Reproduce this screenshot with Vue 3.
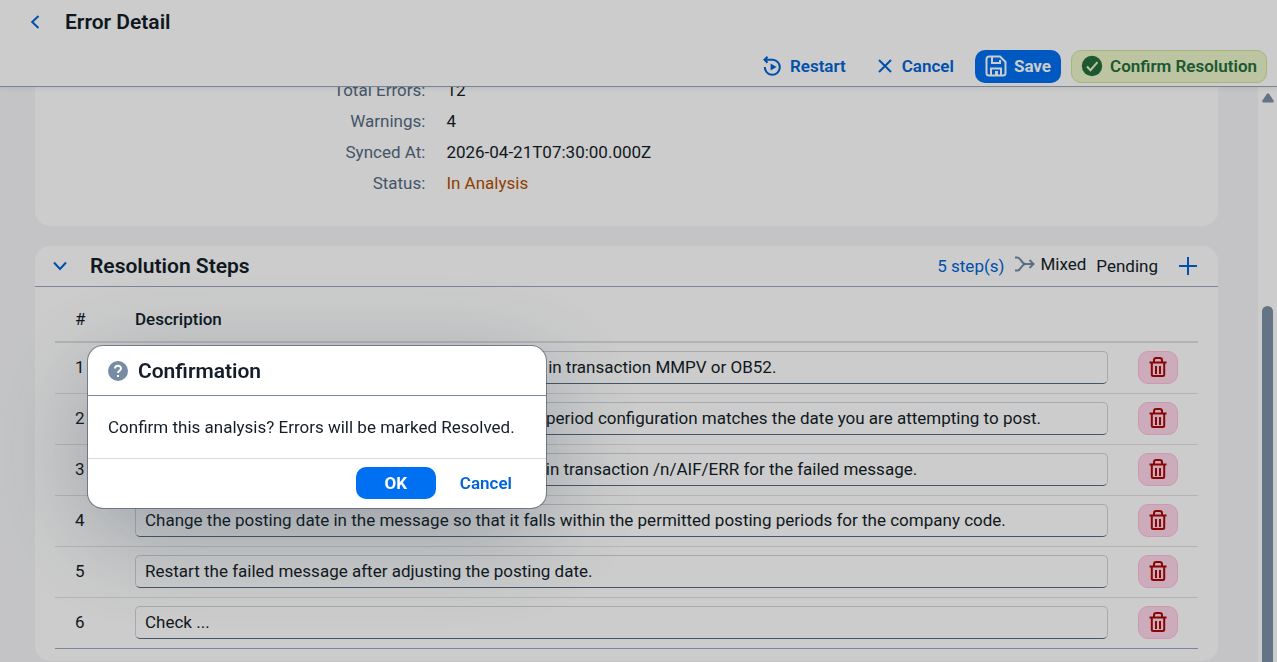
<script setup>
import { ref } from 'vue'

const facts = [
  { label: 'Total Errors:', value: '12' },
  { label: 'Warnings:', value: '4' },
  { label: 'Synced At:', value: '2026-04-21T07:30:00.000Z' },
  { label: 'Status:', value: 'In Analysis', critical: true },
]

const steps = ref([
  'Open the posting period for the whole company code in transaction MMPV or OB52.',
  'Check that the current fiscal year variant and posting period configuration matches the date you are attempting to post.',
  'Analyze the detailed application message log entries in transaction /n/AIF/ERR for the failed message.',
  'Change the posting date in the message so that it falls within the permitted posting periods for the company code.',
  'Restart the failed message after adjusting the posting date.',
  'Check ...',
])
</script>

<template>
  <div class="page">
    <header class="page-header">
      <div class="title-row">
        <button class="back" aria-label="Back">
          <svg width="10" height="14" viewBox="0 0 10 14"><path d="M8.500 1 2.200 7l6.300 6" /></svg>
        </button>
        <h1>Error Detail</h1>
      </div>
      <div class="toolbar">
        <button class="btn">
          <svg class="icon" width="20" height="20" viewBox="0 0 20 20">
            <path d="M4.500 0.800 1.500 3.800l3 3M1.800 3.800h8.200a7.500 7.500 0 1 1-8.200 7.200" />
            <path class="solid" d="M7.600 7.400v7.200l6-3.600z" />
          </svg>
          Restart
        </button>
        <button class="btn close">
          <svg class="icon" width="14" height="14" viewBox="0 0 14 14"><path d="m1 1 12 12M13 1 1 13" /></svg>
          Cancel
        </button>
        <button class="btn primary">
          <svg class="icon" width="22" height="22" viewBox="0 0 22 22">
            <path d="M4 1.500h11l5.500 5.500v11a2.500 2.500 0 0 1-2.500 2.500H4A2.500 2.500 0 0 1 1.500 18V4A2.500 2.500 0 0 1 4 1.500z" />
            <path d="M7 1.500V8h8V5M6 20.500V13.500h10v7" />
            <path class="solid" d="M10 16h3v4h-3z" />
          </svg>
          Save
        </button>
        <button class="btn accept">
          <svg class="icon" width="22" height="22" viewBox="0 0 22 22">
            <circle class="disc" cx="11" cy="11" r="10.200" />
            <path class="tick" d="m6 11.500 3.500 3.700 7-8" />
          </svg>
          Confirm Resolution
        </button>
      </div>
    </header>

    <div class="scroller">
      <main class="content">
        <section class="card facts">
          <dl>
            <template v-for="fact in facts" :key="fact.label">
              <dt>{{ fact.label }}</dt>
              <dd :class="{ critical: fact.critical }">{{ fact.value }}</dd>
            </template>
          </dl>
        </section>

        <section class="card steps">
          <div class="card-header">
            <button class="toggle" aria-label="Collapse section">
              <svg width="14" height="10" viewBox="0 0 14 10"><path d="M1 1.500 7 8l6-6.500" /></svg>
            </button>
            <h2>Resolution Steps</h2>
            <a class="count" href="#steps">5 step(s)</a>
            <span class="mixed">
              <svg width="21" height="16" viewBox="0 0 21 16">
                <path d="M1 1.500h2.500c3.500 0 4 6.500 8 6.500h8M1 14.500h2.500c3.500 0 4-6.500 8-6.500M15.500 4l4 4-4 4" />
              </svg>
              Mixed
            </span>
            <span class="pending">Pending</span>
            <button class="add" aria-label="Add step">
              <svg width="18" height="18" viewBox="0 0 18 18"><path d="M9 0v18M0 9h18" /></svg>
            </button>
          </div>
          <table id="steps">
            <thead>
              <tr>
                <th class="num" scope="col">#</th>
                <th scope="col">Description</th>
                <th class="action"></th>
              </tr>
            </thead>
            <tbody>
              <tr v-for="(step, i) in steps" :key="i">
                <td class="num">{{ i + 1 }}</td>
                <td><input v-model="steps[i]" type="text" :aria-label="`Description of step ${i + 1}`" /></td>
                <td class="action">
                  <button class="delete" :aria-label="`Delete step ${i + 1}`">
                    <svg width="18" height="20" viewBox="0 0 18 20">
                      <path d="M0.500 5.500h17M5 5V3.200Q5 1 7.200 1h3.600Q13 1 13 3.200V5M2.800 6v11.500q0 1.500 1.500 1.500h9.400q1.500 0 1.500-1.500V6" />
                      <path d="M7 9v8M11 9v8" />
                    </svg>
                  </button>
                </td>
              </tr>
            </tbody>
          </table>
        </section>
      </main>
      <div class="scrollbar" aria-hidden="true">
        <svg width="12" height="10" viewBox="0 0 12 10"><path d="M5 .8Q6-.4 7 .8l4.600 6.600Q12.400 9.500 10.500 9.500h-9Q-.4 9.500.4 7.400z" /></svg>
        <div class="thumb"></div>
      </div>
    </div>

    <div class="overlay">
      <div class="dialog" role="alertdialog" aria-labelledby="dialog-title" aria-describedby="dialog-text">
        <div class="dialog-header">
          <svg width="20" height="20" viewBox="0 0 20 20">
            <circle cx="10" cy="10" r="10" />
            <path d="M7 7.600C7 3.800 13 3.800 13 7.500c0 2.300-3 2-3 4.500" />
            <path d="M10 14v2" />
          </svg>
          <h2 id="dialog-title">Confirmation</h2>
        </div>
        <p id="dialog-text">Confirm this analysis? Errors will be marked Resolved.</p>
        <div class="dialog-footer">
          <button class="btn primary ok">OK</button>
          <button class="btn">Cancel</button>
        </div>
      </div>
    </div>
  </div>
</template>

<style>
body {
  background: #f5f6f8;
}
</style>

<style scoped>
.page {
  height: 100vh;
  display: flex;
  flex-direction: column;
  overflow: hidden;
  font-family: Roboto, "Liberation Sans", sans-serif;
  font-size: 17px;
  line-height: 20px;
  color: #131e29;
}
* {
  box-sizing: border-box;
}
h1,
h2 {
  margin: 0;
  font-size: 21px;
  line-height: 24px;
  font-weight: 600;
}
button {
  font: inherit;
  padding: 0;
  border: 0;
  background: none;
  color: #0064d9;
  display: flex;
  align-items: center;
  justify-content: center;
}
svg {
  flex: none;
  fill: none;
  stroke: currentColor;
  stroke-width: 2;
}
.page-header {
  flex: none;
  background: #fff;
  border-bottom: 1px solid #9aa7b5;
  box-shadow: 0 2px 4px rgba(34, 53, 72, 0.08);
  position: relative;
}
.title-row {
  display: flex;
  align-items: center;
  height: 44px;
  padding-left: 20px;
}
.back {
  width: 30px;
  height: 32px;
  margin-right: 15px;
}
.toolbar {
  display: flex;
  justify-content: flex-end;
  gap: 10px;
  padding: 6px 10px 3px 0;
}
.btn {
  height: 33px;
  padding: 0 10px 1px;
  gap: 7px;
  border: 1px solid transparent;
  border-radius: 10px;
  font-weight: 600;
}
.btn.close {
  gap: 10px;
}
.btn.primary {
  background: #0070f2;
  color: #fff;
  font-weight: 700;
}
.btn.accept {
  background: #ebf5cb;
  border-color: #d0e59a;
  color: #256f3a;
}
.btn.primary,
.btn.accept {
  padding: 0 9px 1px;
}
.solid {
  fill: currentColor;
  stroke: none;
}
.disc {
  fill: currentColor;
  stroke: none;
}
.tick {
  stroke: #ebf5cb;
}
.scroller {
  flex: 1;
  min-height: 0;
  display: flex;
  overflow: hidden;
}
.content {
  flex: 1;
  min-width: 0;
  padding: 0 40px 0 35px;
  margin-top: -12px;
}
.card {
  background: #fff;
  border-radius: 15px;
}
.facts {
  padding-bottom: 27px;
  margin-bottom: 20px;
}
dl {
  margin: 0;
  display: grid;
  grid-template-columns: 33% 1fr;
  column-gap: 21px;
  line-height: 31px;
}
dt {
  text-align: right;
  color: #556b82;
}
dd {
  margin: 0;
}
.critical {
  color: #b44f00;
}
.card-header {
  display: flex;
  align-items: center;
  height: 41px;
  padding: 0 15px 0 10px;
  border-bottom: 1px solid #9aa7b8;
}
.toggle {
  width: 30px;
  height: 32px;
  margin-right: 15px;
}
.card-header h2 {
  margin-right: auto;
}
.count {
  color: #0064d9;
  text-decoration: none;
  margin-right: 10px;
}
.mixed {
  display: flex;
  align-items: center;
  gap: 5px;
  margin-right: 10px;
  padding-bottom: 4px;
}
.mixed svg {
  color: #758ca4;
}
.add {
  width: 30px;
  height: 32px;
  margin-left: 15px;
}
table {
  width: calc(100% - 40px);
  margin: 10px 20px 0;
  border-collapse: separate;
  border-spacing: 0;
  table-layout: fixed;
  border-bottom: 1px solid #9aa9bb;
}
.steps {
  padding-bottom: 12px;
}
th {
  height: 46px;
  padding: 0;
  text-align: left;
  font-weight: 500;
  border-bottom: 2px solid #e0e0e0;
}
td {
  height: 51px;
  padding: 0 0 1px;
  border-bottom: 1px solid #e2e2e2;
}
tbody tr:last-child td {
  height: 50px;
  border-bottom: 0;
}
.num {
  width: 80px;
  padding-left: 20px;
  font-weight: 400;
}
td.num {
  padding-bottom: 3px;
}
.action {
  width: 90px;
  padding-left: 30px;
}
input {
  display: block;
  width: 100%;
  height: 33px;
  padding: 0 9px 1px;
  font: inherit;
  color: inherit;
  background: #fff;
  border: 1px solid #cfd5dc;
  border-bottom-color: #556b82;
  border-radius: 5px;
}
.delete {
  width: 40px;
  height: 33px;
  padding-bottom: 1px;
  border: 1px solid #ffc0dd;
  border-radius: 10px;
  background: #ffd6e9;
  color: #aa0808;
}
.scrollbar {
  width: 19px;
  background: #fff;
  color: #7b91a8;
  display: flex;
  flex-direction: column;
  align-items: center;
  padding-top: 6px;
}
.scrollbar svg {
  fill: currentColor;
  stroke: none;
}
.thumb {
  flex: 1;
  width: 11px;
  margin-top: 203px;
  border-radius: 6px 6px 0 0;
  background: #7b91a8;
}
.overlay {
  position: fixed;
  inset: 0;
  background: rgba(0, 0, 0, 0.2);
}
.dialog {
  position: absolute;
  left: 88px;
  top: 346px;
  min-width: 458px;
  background: #fff;
  border-radius: 15px;
  box-shadow: 0 0 0 1px rgba(34, 53, 72, 0.48), 0 25px 100px rgba(34, 53, 72, 0.3);
}
.dialog-header {
  display: flex;
  align-items: center;
  gap: 10px;
  height: 50px;
  padding: 0 20px;
  border-bottom: 1px solid #758ca4;
}
.dialog-header circle {
  fill: #758ca4;
  stroke: none;
}
.dialog-header path {
  stroke: #fff;
}
.dialog p {
  margin: 0;
  padding: 21px 20px;
}
.dialog-footer {
  display: flex;
  justify-content: flex-end;
  gap: 13px;
  padding: 8px 23px 9px;
  border-top: 1px solid #d9d9d9;
}
.dialog-footer .btn {
  height: 32px;
}
.ok {
  width: 80px;
}
</style>
